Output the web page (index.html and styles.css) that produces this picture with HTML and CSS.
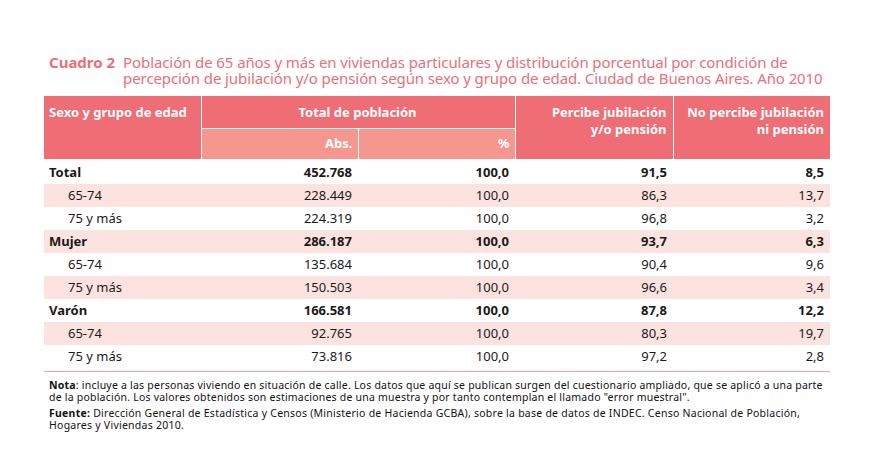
FILE: index.html
```html
<!DOCTYPE html>
<html lang="es">
<head>
<meta charset="utf-8">
<link rel="stylesheet" href="styles.css">
</head>
<body>
<div class="page">
  <div class="title">
    <span class="label">Cuadro 2</span>
    <span class="text">Población de 65 años y más en viviendas particulares y distribución porcentual por condición de percepción de jubilación y/o pensión según sexo y grupo de edad. Ciudad de Buenos Aires. Año 2010</span>
  </div>
  <table class="data">
    <colgroup>
      <col class="c1"><col class="c2"><col class="c3"><col class="c4"><col class="c5">
    </colgroup>
    <thead>
      <tr>
        <th class="h left" rowspan="2">Sexo y grupo de edad</th>
        <th class="h center" colspan="2">Total de población</th>
        <th class="h right" rowspan="2">Percibe jubilación<br>y/o pensión</th>
        <th class="h right" rowspan="2">No percibe jubilación<br>ni pensión</th>
      </tr>
      <tr>
        <th class="sub right">Abs.</th>
        <th class="sub right">%</th>
      </tr>
    </thead>
    <tbody>
      <tr class="b"><td>Total</td><td>452.768</td><td>100,0</td><td>91,5</td><td>8,5</td></tr>
      <tr class="s shade"><td>65-74</td><td>228.449</td><td>100,0</td><td>86,3</td><td>13,7</td></tr>
      <tr class="s"><td>75 y más</td><td>224.319</td><td>100,0</td><td>96,8</td><td>3,2</td></tr>
      <tr class="b shade"><td>Mujer</td><td>286.187</td><td>100,0</td><td>93,7</td><td>6,3</td></tr>
      <tr class="s"><td>65-74</td><td>135.684</td><td>100,0</td><td>90,4</td><td>9,6</td></tr>
      <tr class="s shade"><td>75 y más</td><td>150.503</td><td>100,0</td><td>96,6</td><td>3,4</td></tr>
      <tr class="b"><td>Varón</td><td>166.581</td><td>100,0</td><td>87,8</td><td>12,2</td></tr>
      <tr class="s shade"><td>65-74</td><td>92.765</td><td>100,0</td><td>80,3</td><td>19,7</td></tr>
      <tr class="s last"><td>75 y más</td><td>73.816</td><td>100,0</td><td>97,2</td><td>2,8</td></tr>
    </tbody>
  </table>
  <div class="notes">
    <p class="nota"><strong>Nota</strong>: incluye a las personas viviendo en situación de calle. Los datos que aquí se publican surgen del cuestionario ampliado, que se aplicó a una parte de la población. Los valores obtenidos son estimaciones de una muestra y por tanto contemplan el llamado "error muestral".</p>
    <p class="src"><strong>Fuente:</strong> Dirección General de Estadística y Censos (Ministerio de Hacienda GCBA), sobre la base de datos de INDEC. Censo Nacional de Población, Hogares y Viviendas 2010.</p>
  </div>
</div>
</body>
</html>
```

FILE: styles.css
```css
* { box-sizing: border-box; }
html, body { margin: 0; padding: 0; background: #fff; }
body { font-family: "Noto Sans", "Open Sans", sans-serif; color: #1a1a1a; }
.page { padding: 54px 40px 0 44px; width: 870px; }

.title { display: flex; gap: 8px; color: #e8707a; font-size: 15px; line-height: 16px; padding-left: 5px; margin-bottom: 10px; }
.title .label { font-weight: 700; white-space: nowrap; }
.title .text { letter-spacing: -0.1px; }

.data { width: 786px; border-collapse: collapse; table-layout: fixed; font-size: 13px; }
.c1 { width: 157px; } .c2 { width: 157px; } .c3 { width: 157px; } .c4 { width: 158px; } .c5 { width: 157px; }

.data th { color: #fff; font-weight: 700; font-size: 13px; line-height: 17px; border: 1px solid #fff; border-top: 0; }
.data th:first-child { border-left: 0; }
.data th:last-child { border-right: 0; }
.h { background: #ef6d74; height: 32px; vertical-align: top; padding: 8px 6px 0 5px; }
.sub { background: #f5968f; height: 31px; padding: 0 5px 0 6px; vertical-align: middle; }
.left { text-align: left; }
.center { text-align: center; }
.right { text-align: right; }

.data td { height: 23px; padding: 0 6px 0 5px; text-align: right; line-height: 17px; vertical-align: middle; }
.data td:first-child { text-align: left; }
.data tbody tr:first-child td { padding-top: 2px; height: 25px; }
.b td { font-weight: 700; }
.s td:first-child { padding-left: 24px; }
.shade td { background: #fde3df; }
.last td { border-bottom: 1px solid #f0a2a6; height: 26px; padding-bottom: 2px; }

.notes { font-size: 10.5px; line-height: 12px; margin-top: 7px; padding-left: 5px; width: 785px; color: #111; }
.notes p { margin: 0 0 4px 0; }
.notes .nota { letter-spacing: 0.22px; }
.notes .src { letter-spacing: 0.25px; }
```
